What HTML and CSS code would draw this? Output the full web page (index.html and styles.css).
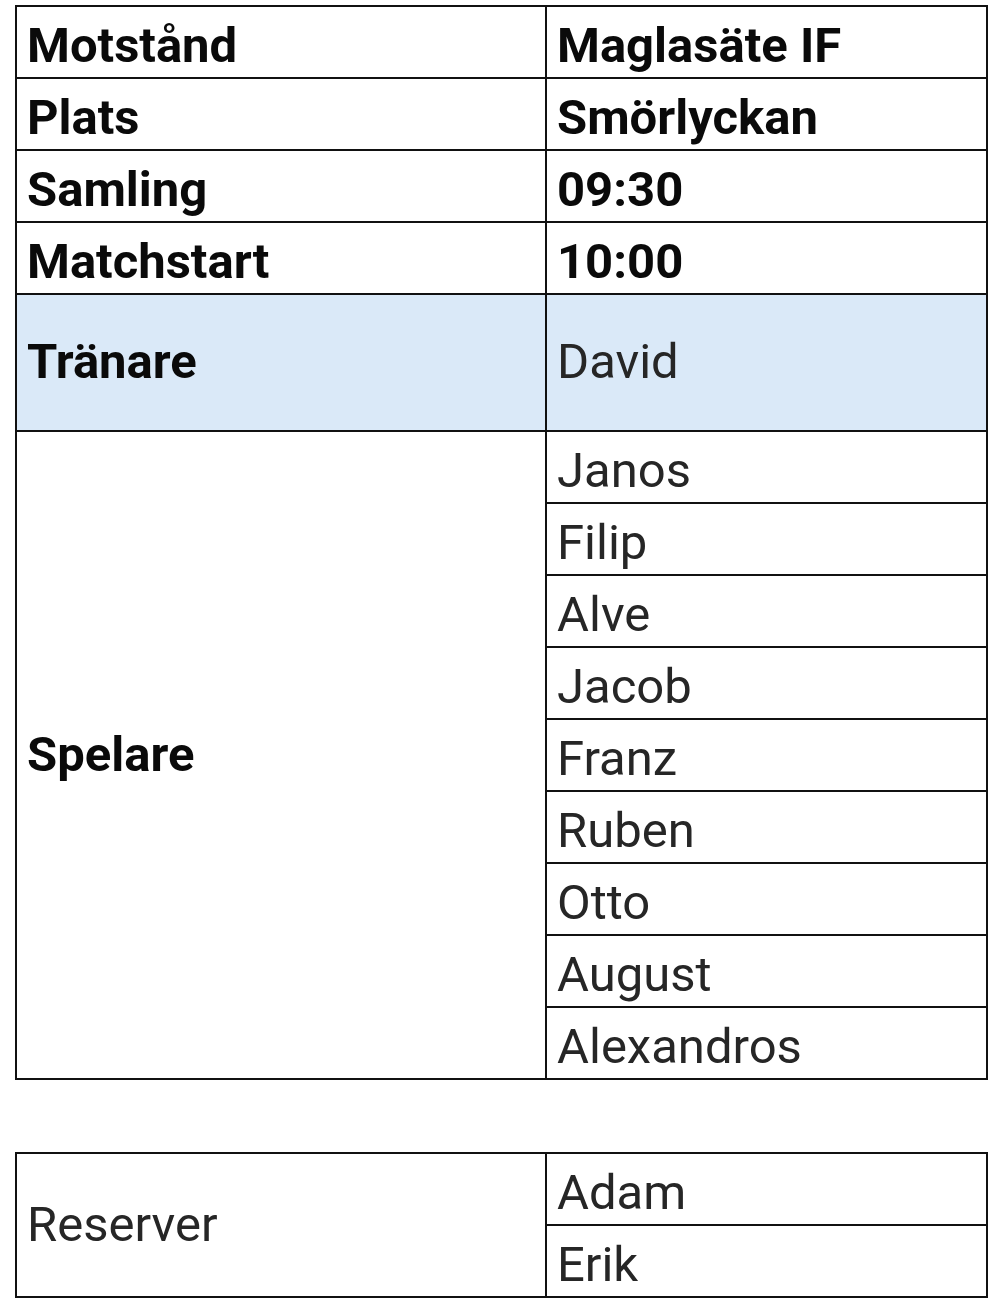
FILE: index.html
```html
<!DOCTYPE html>
<html lang="sv">
<head>
<meta charset="utf-8">
<title>Laguttagning</title>
<link rel="stylesheet" href="styles.css">
</head>
<body>
<div class="sheet">
  <div class="grid main">
    <div class="cell b">Motstånd</div><div class="cell b">Maglasäte IF</div>
    <div class="cell b">Plats</div><div class="cell b">Smörlyckan</div>
    <div class="cell b">Samling</div><div class="cell b num">09:30</div>
    <div class="cell b">Matchstart</div><div class="cell b num">10:00</div>
    <div class="cell b alt mid">Tränare</div><div class="cell alt mid coach">David</div>
    <div class="cell b mid spelare">Spelare</div>
    <div class="cell">Janos</div>
    <div class="cell">Filip</div>
    <div class="cell">Alve</div>
    <div class="cell">Jacob</div>
    <div class="cell">Franz</div>
    <div class="cell">Ruben</div>
    <div class="cell">Otto</div>
    <div class="cell">August</div>
    <div class="cell">Alexandros</div>
  </div>
  <div class="grid reserves">
    <div class="cell mid reserv">Reserver</div>
    <div class="cell">Adam</div>
    <div class="cell">Erik</div>
  </div>
</div>
</body>
</html>
```

FILE: styles.css
```css
html, body {
  margin: 0;
  padding: 0;
  background: #ffffff;
}
.sheet {
  padding: 5px 0 0 15px;
  display: flex;
  flex-direction: column;
  gap: 72px;
}
.grid {
  display: grid;
  grid-template-columns: 530px 441px;
  grid-auto-rows: 72px;
  width: 971px;
  border-top: 2px solid #111111;
  border-left: 2px solid #111111;
}
.main {
  grid-template-rows: 72px 72px 72px 72px 137px repeat(9, 72px);
}
.cell {
  box-sizing: border-box;
  border-right: 2px solid #111111;
  border-bottom: 2px solid #111111;
  display: flex;
  align-items: flex-end;
  padding: 0 0 1px 10px;
  font-family: Roboto, "Liberation Sans", sans-serif;
  font-size: 49px;
  line-height: 1.2;
  color: #262626;
  white-space: nowrap;
}
.b {
  font-weight: 700;
  color: #0a0a0a;
}
.alt {
  background: #dae9f8;
}
.mid {
  align-items: center;
  padding-bottom: 0;
}
.spelare {
  grid-row: span 9;
}
.reserv {
  grid-row: span 2;
}
```
